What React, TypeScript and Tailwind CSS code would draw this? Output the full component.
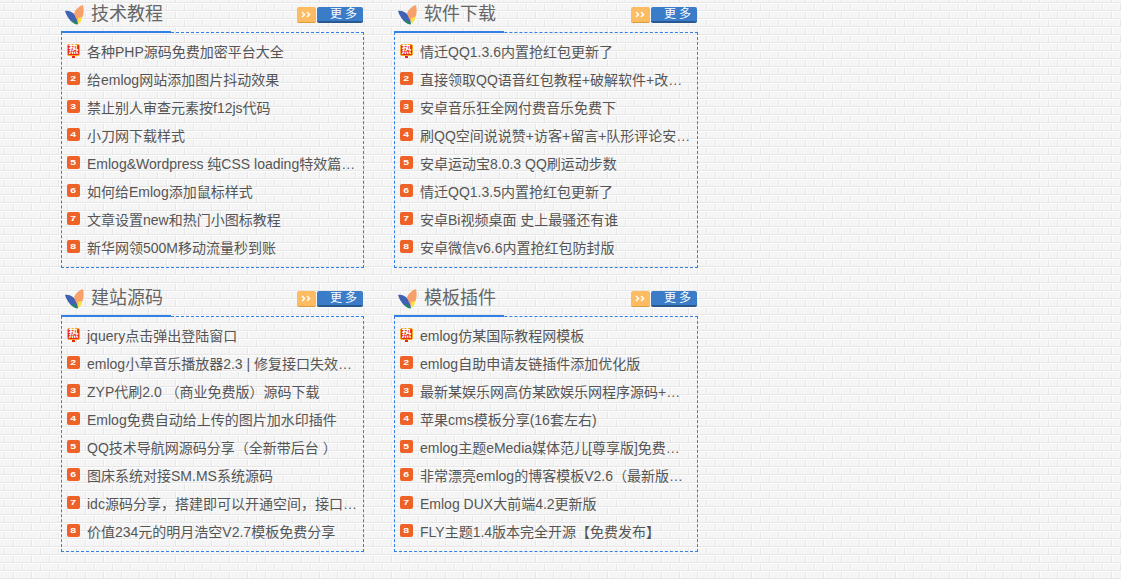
const sections = [
  {
    title: "技术教程",
    items: [
      "各种PHP源码免费加密平台大全",
      "给emlog网站添加图片抖动效果",
      "禁止别人审查元素按f12js代码",
      "小刀网下载样式",
      "Emlog&Wordpress 纯CSS loading特效篇（一）",
      "如何给Emlog添加鼠标样式",
      "文章设置new和热门小图标教程",
      "新华网领500M移动流量秒到账",
    ],
  },
  {
    title: "软件下载",
    items: [
      "情迁QQ1.3.6内置抢红包更新了",
      "直接领取QQ语音红包教程+破解软件+改语音包",
      "安卓音乐狂全网付费音乐免费下",
      "刷QQ空间说说赞+访客+留言+队形评论安卓版",
      "安卓运动宝8.0.3 QQ刷运动步数",
      "情迁QQ1.3.5内置抢红包更新了",
      "安卓Bi视频桌面 史上最骚还有谁",
      "安卓微信v6.6内置抢红包防封版",
    ],
  },
  {
    title: "建站源码",
    items: [
      "jquery点击弹出登陆窗口",
      "emlog小草音乐播放器2.3 | 修复接口失效问题版本",
      "ZYP代刷2.0 （商业免费版）源码下载",
      "Emlog免费自动给上传的图片加水印插件",
      "QQ技术导航网源码分享（全新带后台 ）",
      "图床系统对接SM.MS系统源码",
      "idc源码分享，搭建即可以开通空间，接口对接",
      "价值234元的明月浩空V2.7模板免费分享",
    ],
  },
  {
    title: "模板插件",
    items: [
      "emlog仿某国际教程网模板",
      "emlog自助申请友链插件添加优化版",
      "最新某娱乐网高仿某欧娱乐网程序源码+教程",
      "苹果cms模板分享(16套左右)",
      "emlog主题eMedia媒体范儿[尊享版]免费分享下载",
      "非常漂亮emlog的博客模板V2.6（最新版本分享）",
      "Emlog DUX大前端4.2更新版",
      "FLY主题1.4版本完全开源【免费发布】",
    ],
  },
];

function Logo() {
  return (
    <svg width="20" height="21" viewBox="0 0 20 21" className="mr-[6px] shrink-0">
      <path d="M0 6 C5 5 9 8 12 13 L13 19 C8 19 3 15 0 6 Z" fill="#3f62b4" />
      <path d="M6 15 C9 15 12 17 13 19.5 C10 19.5 8 18 6 15 Z" fill="#1f8a5a" />
      <path d="M9 8 C11 4 14 1 18 0 C19 5 19 9 17 13 L14 18 C12 15 10 12 9 8 Z" fill="#f8a06a" />
      <path d="M13 13 L17 12 C17 15 16 17 13.5 19 C13 17 13 15 13 13 Z" fill="#fce23c" />
    </svg>
  );
}

function Badge({ index }: { index: number }) {
  if (index === 0) {
    return (
      <span className="absolute left-[5px] top-[6px] flex h-[12px] w-[13px] items-center justify-center rounded-[2px] border border-[#f5a623] bg-[#e8260f] text-[10px] font-bold leading-none text-white">
        热
        <span className="absolute -bottom-[3px] left-[4px] h-[2px] w-[3px] bg-[#e8260f]" />
      </span>
    );
  }
  return (
    <span className="absolute left-[5px] top-[6px] flex h-[13px] w-[13px] items-center justify-center rounded-[2px] bg-[#ee6127] text-[8px] font-bold leading-none text-white">
      <span className="scale-x-[1.3] scale-y-[0.85]">{index + 1}</span>
    </span>
  );
}

function Panel({ title, items }: { title: string; items: string[] }) {
  return (
    <div>
      <div className="relative z-10 flex h-[33px] -mb-px items-start justify-between">
        <div className="flex h-[33px] w-[110px] items-center border-b-2 border-[#3080e8] pl-[4px]">
          <Logo />
          <h2 className="mb-[4px] whitespace-nowrap text-[18px] font-normal leading-none text-[#666666]">{title}</h2>
        </div>
        <a className="mr-px mt-[7px] flex h-[16px]">
          <span className="flex w-[19px] items-center justify-center rounded-[2px] border-b border-[#e09a3c] bg-[#fdbb62]">
            <svg width="11" height="7" viewBox="0 0 11 7" fill="none" stroke="#ffffff" strokeWidth="1.5">
              <path d="M1 1 L3.5 3.5 L1 6" />
              <path d="M6 1 L8.5 3.5 L6 6" />
            </svg>
          </span>
          <span className="ml-px flex w-[46px] items-center rounded-[2px] border-b-2 border-[#28588f] bg-[#3a7cc8] pl-[13px] text-[12px] leading-none tracking-[3px] text-white">
            更多
          </span>
        </a>
      </div>
      <ul className="border border-dashed border-[#3080e8] py-[5px] pl-[25px] pr-[6px]">
        {items.map((item, i) => (
          <li key={item} className="relative -ml-[25px] truncate pl-[25px] text-[14px] leading-[28px] text-[#555555]">
            <Badge index={i} />
            {item}
          </li>
        ))}
      </ul>
    </div>
  );
}

export default function App() {
  return (
    <div className="min-h-screen bg-[#f5f5f5] bg-[position:0_2px] bg-[url('data:image/svg+xml,%3Csvg%20xmlns=%22http://www.w3.org/2000/svg%22%20width=%2218%22%20height=%2216%22%3E%3Crect%20width=%2218%22%20height=%2216%22%20fill=%22%23f5f5f5%22/%3E%3Cpath%20d=%22M0%200.5H18M0%208.5H18M4.5%200V8M13.5%208V16%22%20stroke=%22%23e7e7e7%22/%3E%3Cpath%20d=%22M0%201.5H18M0%209.5H18M5.5%201V8M14.5%209V16%22%20stroke=%22%23fdfdfd%22/%3E%3C/svg%3E')] font-['Liberation_Sans','Noto_Sans_CJK_SC',sans-serif]">
      <div className="ml-[61px] grid w-[637px] grid-cols-[303px_304px] gap-x-[30px] gap-y-[16px] pb-[27px]">
        {sections.map((s) => (
          <Panel key={s.title} title={s.title} items={s.items} />
        ))}
      </div>
    </div>
  );
}
